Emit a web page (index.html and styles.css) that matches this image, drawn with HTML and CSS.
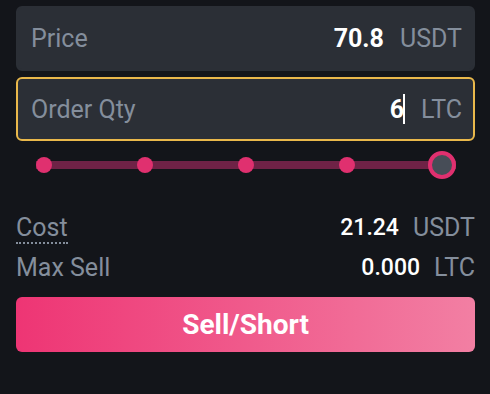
FILE: index.html
```html
<!DOCTYPE html>
<html lang="en">
<head>
  <meta charset="UTF-8" />
  <meta name="viewport" content="width=device-width, initial-scale=1.0"/>
  <title>Sell Order</title>
  <link rel="stylesheet" href="styles.css">
</head>
<body>

<!-- Order form -->
<div class="order-form">
  <div class="field">
    <span class="field-label">Price</span>
    <span class="field-value">70.8</span>
    <span class="field-unit">USDT</span>
  </div>
  <div class="field field-active">
    <span class="field-label">Order Qty</span>
    <span class="field-value">6<span class="caret"></span></span>
    <span class="field-unit">LTC</span>
  </div>

  <div class="slider">
    <span class="dot"></span>
    <span class="dot"></span>
    <span class="dot"></span>
    <span class="dot"></span>
    <span class="handle"></span>
  </div>

  <div class="info-row first">
    <span class="info-label dotted">Cost</span>
    <span class="info-value">21.24</span>
    <span class="info-unit">USDT</span>
  </div>
  <div class="info-row">
    <span class="info-label">Max Sell</span>
    <span class="info-value">0.000</span>
    <span class="info-unit">LTC</span>
  </div>

  <button class="btn-sell">Sell/Short</button>
</div>

</body>
</html>
```

FILE: styles.css
```css
body {
  margin: 0;
  padding: 0;
  background: #13151a;
  font-family: Roboto, "Noto Sans", sans-serif;
}

.order-form {
  padding: 6px 15px 0 16px;
}

.field {
  display: flex;
  align-items: center;
  height: 65px;
  box-sizing: border-box;
  padding: 0 11px 0 13px;
  background: #2b2f36;
  border: 2px solid #2b2f36;
  border-radius: 6px;
  margin-bottom: 6px;
}

.field-active {
  border-color: #e9b84b;
  height: 64px;
}

.field-label {
  flex: 1;
  color: #848e9c;
  font-size: 25px;
}

.field-value {
  color: #fff;
  font-weight: bold;
  font-size: 25px;
  display: flex;
  align-items: center;
}

.caret {
  display: inline-block;
  width: 2px;
  height: 30px;
  background: #fff;
  margin-left: -1px;
}

.field-unit {
  color: #848e9c;
  font-size: 25px;
  margin-left: 16px;
}

/* Slider */
.slider {
  display: flex;
  justify-content: space-between;
  align-items: center;
  height: 28px;
  margin: 10px 19px 0 20px;
  background: linear-gradient(#6f2246, #6f2246) center / 100% 8px no-repeat;
}

.dot {
  width: 16px;
  height: 16px;
  border-radius: 50%;
  background: #e0306f;
}

.handle {
  width: 28px;
  height: 28px;
  margin-left: -12px;
  box-sizing: border-box;
  border-radius: 50%;
  background: #474d57;
  border: 4px solid #e0306f;
}

/* Info rows */
.info-row {
  display: flex;
  align-items: center;
  height: 40px;
}

.info-row.first {
  margin-top: 28px;
}

.info-label {
  flex: 1;
  color: #848e9c;
  font-size: 25px;
}

.dotted {
  flex: none;
  margin-right: auto;
  line-height: 28px;
  padding-top: 4px;
  border-bottom: 2px dotted #848e9c;
}

.info-value {
  color: #fff;
  font-weight: 500;
  font-size: 23px;
}

.info-unit {
  color: #848e9c;
  font-size: 25px;
  margin-left: 14px;
}

.btn-sell {
  display: block;
  width: 100%;
  height: 55px;
  margin-top: 10px;
  border: none;
  border-radius: 6px;
  background: linear-gradient(90deg, #ee3574, #f27fa3);
  color: #fff;
  font-family: Roboto, sans-serif;
  font-weight: bold;
  font-size: 28px;
  cursor: pointer;
}
```
